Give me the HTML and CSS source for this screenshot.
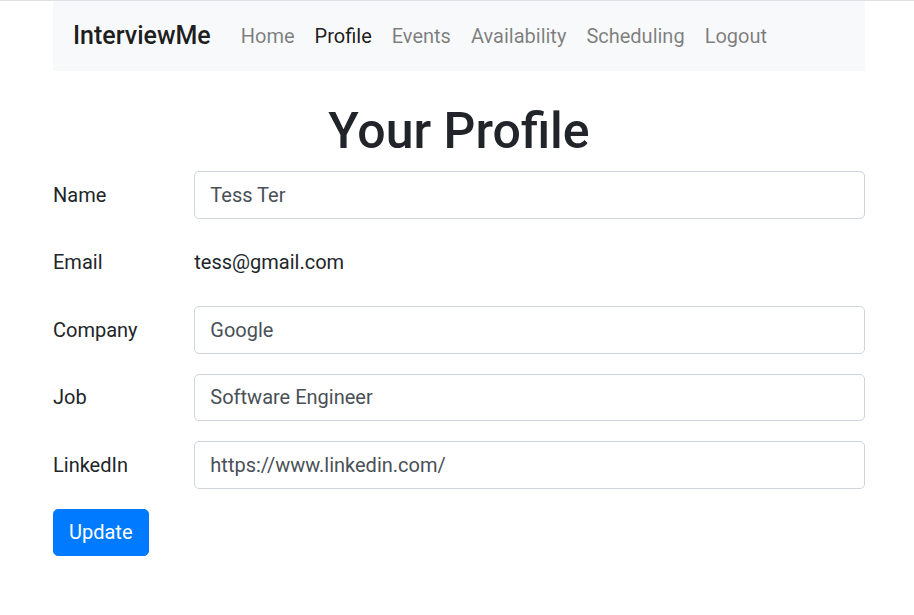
FILE: index.html
```html
<!DOCTYPE html>
<html lang="en">
<head>
<meta charset="utf-8">
<title>InterviewMe - Profile</title>
<link rel="stylesheet" href="styles.css">
</head>
<body>
<div class="container">
  <nav class="navbar">
    <a class="brand" href="#">InterviewMe</a>
    <ul class="nav">
      <li><a class="nav-link" href="#">Home</a></li>
      <li><a class="nav-link active" href="#">Profile</a></li>
      <li><a class="nav-link" href="#">Events</a></li>
      <li><a class="nav-link" href="#">Availability</a></li>
      <li><a class="nav-link" href="#">Scheduling</a></li>
      <li><a class="nav-link" href="#">Logout</a></li>
    </ul>
  </nav>
  <h1 class="title">Your Profile</h1>
  <form class="form">
    <div class="form-row">
      <label class="form-label" for="name">Name</label>
      <input class="form-control" id="name" type="text" value="Tess Ter">
    </div>
    <div class="form-row">
      <span class="form-label">Email</span>
      <span class="form-label">tess@gmail.com</span>
    </div>
    <div class="form-row">
      <label class="form-label" for="company">Company</label>
      <input class="form-control" id="company" type="text" value="Google">
    </div>
    <div class="form-row">
      <label class="form-label" for="job">Job</label>
      <input class="form-control" id="job" type="text" value="Software Engineer">
    </div>
    <div class="form-row">
      <label class="form-label" for="linkedin">LinkedIn</label>
      <input class="form-control" id="linkedin" type="text" value="https://www.linkedin.com/">
    </div>
    <button class="btn" type="button">Update</button>
  </form>
</div>
</body>
</html>
```
FILE: styles.css
```css
* { box-sizing: border-box; }
html, body { margin: 0; padding: 0; }
body {
  font-family: Roboto, "Liberation Sans", Arial, sans-serif;
  font-size: 20px;
  line-height: 1.5;
  color: #212529;
  background: #fff;
  border-top: 1px solid #dee2e6;
}
.container {
  width: 812px;
  margin-left: 53px;
}
.navbar {
  display: flex;
  align-items: center;
  background: #f8f9fa;
  padding: 10px 20px;
}
.brand {
  font-size: 25px;
  line-height: 37.5px;
  padding: 6.25px 0;
  margin-right: 20px;
  color: rgba(0,0,0,.9);
  text-decoration: none;
  font-weight: 500;
}
.nav {
  display: flex;
  list-style: none;
  margin: 0;
  padding: 0;
}
.nav-link {
  display: block;
  padding: 10px 10px;
  color: rgba(0,0,0,.5);
  text-decoration: none;
}
.nav-link.active { color: rgba(0,0,0,.9); }
.title {
  text-align: center;
  font-size: 50px;
  font-weight: 500;
  line-height: 1.2;
  margin: 30px 0 10px;
}
.form { margin: 0; }
.form-row {
  display: grid;
  grid-template-columns: 110.33px 1fr;
  column-gap: 31px;
  margin-bottom: 20px;
}
.form-label {
  padding: 8.75px 0;
  line-height: 30px;
  font-size: 20px;
}
.form-control {
  display: block;
  width: 100%;
  height: 47.5px;
  padding: 7.5px 15px;
  font-family: inherit;
  font-size: 20px;
  line-height: 30px;
  color: #495057;
  background: #fff;
  border: 1.25px solid #ced4da;
  border-radius: 5px;
}
.btn {
  display: inline-block;
  font-family: inherit;
  font-size: 20px;
  line-height: 30px;
  padding: 7.5px 15px;
  height: 47.5px;
  color: #fff;
  background: #007bff;
  border: 1.25px solid #007bff;
  border-radius: 5px;
  cursor: pointer;
}
```
